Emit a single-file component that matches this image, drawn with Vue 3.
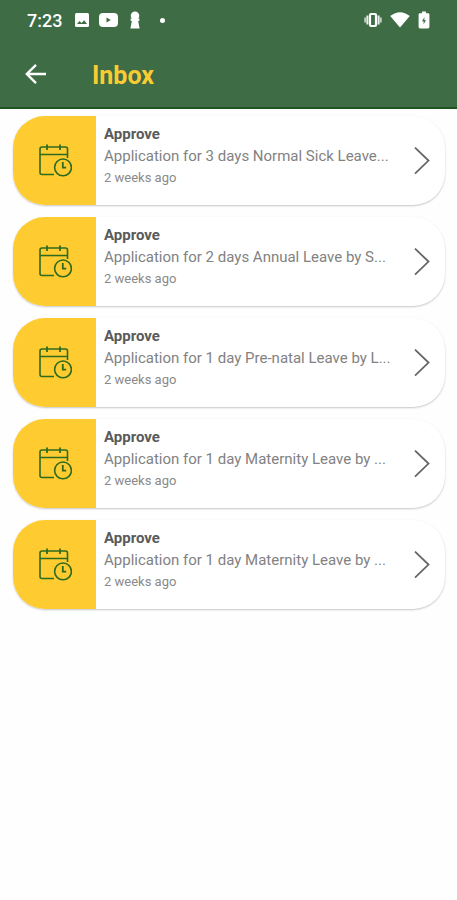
<template>
  <div class="inbox-page">
    <header class="top">
      <div class="status-bar">
        <span class="clock">7:23</span>
        <!-- notifications -->
        <svg class="s-image" width="14" height="14" viewBox="0 0 14 14">
          <rect width="14" height="14" rx="1.5" fill="#fff" />
          <path d="M2 11 L4.5 8 L6.5 10 L9.2 7.2 L12 11 Z" fill="#3e6c45" />
        </svg>
        <svg class="s-video" width="19" height="14" viewBox="0 0 19 14">
          <rect width="19" height="14" rx="4" fill="#fff" />
          <path d="M7.5 4.5 L11.8 7 L7.5 9.5 Z" fill="#3e6c45" />
        </svg>
        <svg class="s-pawn" width="10" height="18" viewBox="0 0 10 18">
          <circle cx="5" cy="4.7" r="4.3" fill="#fff" />
          <path d="M0.6 7.5 H9.4 V9.4 L8.2 10.2 L9.6 17.5 H0.4 L1.8 10.2 L0.6 9.4 Z" fill="#fff" />
        </svg>
        <span class="dot"></span>
        <!-- system -->
        <div class="system">
          <svg width="18" height="16" viewBox="0 0 18 16">
            <path d="M3.4 3.5 V12.5 M14.6 3.5 V12.5" stroke="#fff" stroke-width="2" opacity=".9" />
            <path d="M1.2 5.5 V10.5 M16.8 5.5 V10.5" stroke="#fff" stroke-width="1.8" opacity=".7" />
            <rect x="6" y="2" width="6" height="12" rx="1" fill="none" stroke="#fff" stroke-width="2.2" />
          </svg>
          <svg width="20" height="16" viewBox="0 0 20 16">
            <path d="M0.2 4 Q10 -3.6 19.8 4 L10 15.6 Z" fill="#fff" />
          </svg>
          <svg width="12" height="18" viewBox="0 0 12 18">
            <path d="M4 0.5 H8 V2.2 H10 Q11.4 2.2 11.4 3.6 V16 Q11.4 17.4 10 17.4 H2 Q0.6 17.4 0.6 16 V3.6 Q0.6 2.2 2 2.2 H4 Z" fill="#fff" />
            <path d="M6.4 6.2 L4 10.2 H5.6 V13.2 L8 9.2 H6.4 Z" fill="#3e6c45" />
          </svg>
        </div>
      </div>
      <div class="title-bar">
        <button class="back" type="button" aria-label="Back">
          <svg width="22" height="22" viewBox="0 0 22 22">
            <path d="M21 11 H2 M11 1.8 L1.8 11 L11 20.2" fill="none" stroke="#fff" stroke-width="2.4" />
          </svg>
        </button>
        <h1>Inbox</h1>
      </div>
    </header>

    <main class="list">
      <a v-for="(item, index) in items" :key="index" class="card" href="#">
        <span class="thumb">
          <svg width="34" height="34" viewBox="0 0 34 34" fill="none" stroke="#2f6b1f" stroke-width="1.6">
            <path d="M16 30.5 H4 Q2 30.5 2 28.5 V5 Q2 3 4 3 H27.5 Q29.5 3 29.5 5 V14" />
            <path d="M2 10.5 H29.5" />
            <path d="M9 0.5 V6 M22 0.5 V6" stroke-width="1.8" />
            <circle cx="25" cy="23.4" r="8.4" />
            <path d="M24.8 18 V23.6 H28.2" stroke-width="1.8" />
          </svg>
        </span>
        <span class="info">
          <span class="name">{{ item.title }}</span>
          <span class="desc">{{ item.desc }}</span>
          <span class="time">{{ item.time }}</span>
        </span>
        <svg class="arrow" width="16" height="28" viewBox="0 0 16 28">
          <path d="M1 0.6 L14.5 13.6 L1 26.6" fill="none" stroke="#666" stroke-width="1.8" />
        </svg>
      </a>
    </main>
  </div>
</template>

<script setup>
import { ref } from 'vue'

const items = ref([
  { title: 'Approve', desc: 'Application for 3 days Normal Sick Leave...', time: '2 weeks ago' },
  { title: 'Approve', desc: 'Application for 2 days Annual Leave by S...', time: '2 weeks ago' },
  { title: 'Approve', desc: 'Application for 1 day Pre-natal Leave by L...', time: '2 weeks ago' },
  { title: 'Approve', desc: 'Application for 1 day Maternity Leave by ...', time: '2 weeks ago' },
  { title: 'Approve', desc: 'Application for 1 day Maternity Leave by ...', time: '2 weeks ago' }
])
</script>

<style>
body {
  margin: 0;
  background: #fefefe;
}
</style>

<style scoped>
.inbox-page {
  font-family: Roboto, "Liberation Sans", sans-serif;
}

.top {
  background: #3e6c45;
  border-bottom: 2px solid #1c5520;
}

.status-bar {
  display: flex;
  align-items: center;
  height: 40px;
  padding: 0 27px;
  color: #fff;
}

.clock {
  font-size: 18px;
  font-weight: 500;
}

.s-image {
  margin-left: 13px;
}

.s-video {
  margin-left: 10px;
}

.s-pawn {
  margin-left: 12px;
}

.dot {
  width: 5px;
  height: 5px;
  margin-left: 20px;
  border-radius: 50%;
  background: #fff;
}

.system {
  display: flex;
  align-items: center;
  gap: 8px;
  margin-left: auto;
}

.title-bar {
  display: flex;
  align-items: center;
  height: 67px;
  padding: 0 25px;
}

.back {
  display: flex;
  padding: 0;
  border: 0;
  background: transparent;
  cursor: pointer;
}

.title-bar h1 {
  margin: 4px 0 0 45px;
  color: #fbcb34;
  font-size: 25px;
  font-weight: 700;
}

.list {
  display: flex;
  flex-direction: column;
  gap: 12px;
  padding: 7px 12px 12px 13px;
}

.card {
  display: flex;
  align-items: center;
  height: 89px;
  border-radius: 32px;
  background: #fff;
  box-shadow: 0 1px 2px rgba(0, 0, 0, .22);
  overflow: hidden;
  text-decoration: none;
}

.thumb {
  display: flex;
  flex: none;
  align-items: center;
  justify-content: center;
  align-self: stretch;
  width: 83px;
  background: #fecb31;
}

.info {
  display: flex;
  flex: 1;
  flex-direction: column;
  align-self: flex-start;
  min-width: 0;
  padding: 7px 16px 0 8px;
}

.info span {
  overflow: hidden;
  white-space: nowrap;
  text-overflow: ellipsis;
}

.name {
  color: #5a5a5a;
  font-size: 15px;
  font-weight: 700;
  line-height: 22px;
}

.desc {
  color: #828282;
  font-size: 15px;
  line-height: 22px;
}

.time {
  color: #8a8a8a;
  font-size: 13px;
  line-height: 22px;
}

.arrow {
  flex: none;
  margin-right: 15px;
}
</style>
